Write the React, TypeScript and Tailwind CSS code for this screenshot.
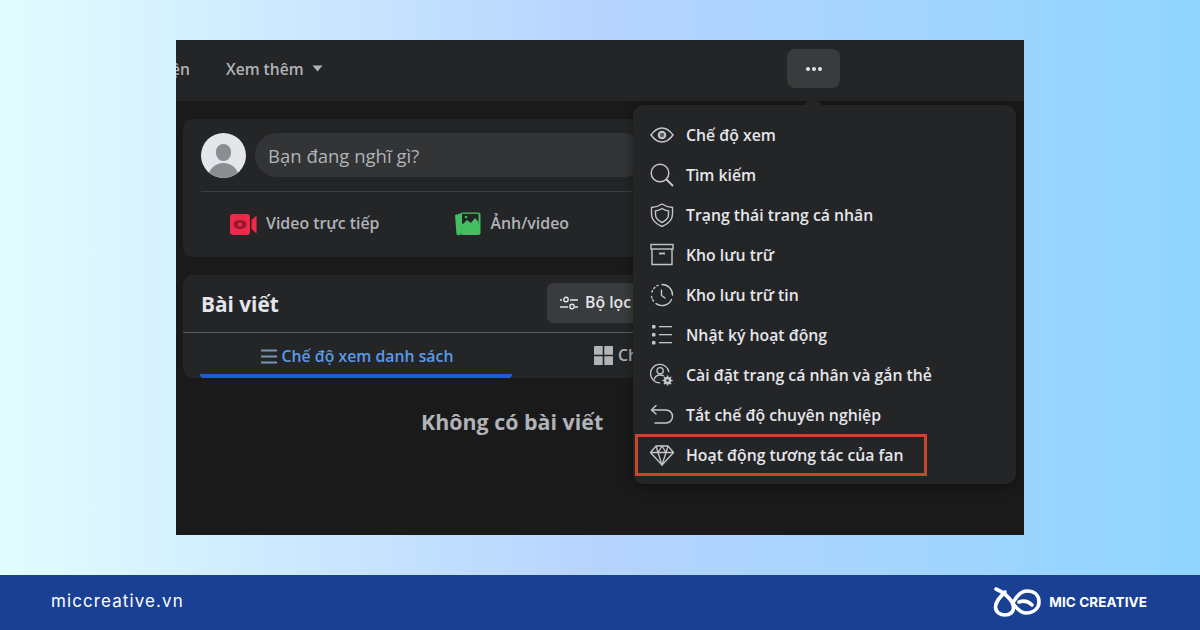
const IC = "#c4c6ca";

const Eye = () => (
  <svg width="24" height="24" viewBox="0 0 24 24" fill="none" stroke={IC} strokeWidth="1.5">
    <path d="M1 12 C5 6.5 8.500 5 12 5 C15.500 5 19 6.500 23 12 C19 17.500 15.500 19 12 19 C8.500 19 5 17.500 1 12 Z" />
    <circle cx="12" cy="12" r="3.300" fill={IC} fillOpacity="0.35" strokeWidth="2" />
  </svg>
);
const Search = () => (
  <svg width="24" height="24" viewBox="0 0 24 24" fill="none" stroke={IC} strokeWidth="1.500" strokeLinecap="round">
    <circle cx="10" cy="10" r="8.800" />
    <path d="M16.500 16.500 L22.500 22.500" strokeWidth="2" />
  </svg>
);
const Shield = () => (
  <svg width="24" height="24" viewBox="0 0 24 24" fill="none" stroke={IC} strokeWidth="1.400">
    <path d="M12 1 C15 3 18.500 4.200 22.500 4.500 V11 C22.500 17 18 21 12 23.500 C6 21 1.500 17 1.500 11 V4.500 C5.500 4.200 9 3 12 1 Z" />
    <path d="M12 5.500 C14 6.800 16.300 7.600 18.500 7.900 V11.500 C18.500 15 15.800 17.700 12 19.500 C8.200 17.700 5.500 15 5.500 11.500 V7.900 C7.700 7.600 10 6.800 12 5.500 Z" />
  </svg>
);
const Archive = () => (
  <svg width="24" height="24" viewBox="0 0 24 24" fill="none" stroke={IC} strokeWidth="1.400">
    <rect x="1" y="1.500" width="22" height="4.500" />
    <path d="M2 6 V21.500 H22 V6" />
    <path d="M9 10.500 H15" strokeWidth="1.800" />
  </svg>
);
const History = () => (
  <svg width="24" height="24" viewBox="0 0 24 24" fill="none" stroke={IC} strokeWidth="1.400" strokeLinecap="round">
    <path d="M12 1.500 A10.500 10.500 0 0 1 22.500 12" />
    <path d="M21.500 16.500 A10.500 10.500 0 0 1 6 20.700" />
    <path d="M3.500 18 A10.500 10.500 0 0 1 1.500 13" strokeDasharray="1.500 2" />
    <path d="M2 9 A10.500 10.500 0 0 1 8 2.300" strokeDasharray="1.500 2.500" />
    <path d="M11.500 7 V12.500 L15 15" />
  </svg>
);
const ListIc = () => (
  <svg width="24" height="24" viewBox="0 0 24 24" fill={IC}>
    <rect x="2" y="2" width="3.500" height="3.500" rx="0.800" />
    <rect x="2" y="10" width="3.500" height="3.500" rx="0.800" />
    <rect x="2" y="18" width="3.500" height="3.500" rx="0.800" />
    <rect x="9" y="3" width="13" height="1.300" />
    <rect x="9" y="11" width="13" height="1.300" />
    <rect x="9" y="19" width="13" height="1.300" />
  </svg>
);
const UserGear = () => (
  <svg width="26" height="26" viewBox="0 0 26 26" fill="none" stroke={IC} strokeWidth="1.400">
    <path d="M11 21.500 A10 10 0 1 1 20.500 10" />
    <circle cx="11" cy="8.500" r="3.400" />
    <path d="M4.500 18 C5.500 14.500 8 13 11 13 C12.500 13 13.800 13.300 15 14" />
    <circle cx="19" cy="19" r="3.200" fill={IC} stroke={IC} strokeWidth="1.500" />
    <path d="M19 13.500 V24.500 M13.500 19 H24.500 M15.200 15.200 L22.800 22.800 M22.800 15.200 L15.200 22.800" strokeWidth="1.800" />
    <circle cx="19" cy="19" r="1.300" fill="#242526" stroke="none" />
  </svg>
);
const Undo = () => (
  <svg width="24" height="24" viewBox="0 0 24 24" fill="none" stroke={IC} strokeWidth="1.500" strokeLinecap="round" strokeLinejoin="round">
    <path d="M2 7 H16 A6 6 0 0 1 16 20 H5" />
    <path d="M6 2.500 L1.500 7 L6 11" />
  </svg>
);
const Diamond = () => (
  <svg width="24" height="24" viewBox="0 0 24 24" fill="none" stroke={IC} strokeWidth="1.300" strokeLinejoin="round">
    <path d="M6 3 H18 L23.500 9.500 L12 22 L0.500 9.500 Z" />
    <path d="M0.500 9.500 H23.500 M6 3 L8 9.500 L12 22 L16 9.500 L18 3 M8 9.500 L12 3 L16 9.500" />
  </svg>
);

const items: [string, React.ReactNode][] = [
  ["Chế độ xem", <Eye />],
  ["Tìm kiếm", <Search />],
  ["Trạng thái trang cá nhân", <Shield />],
  ["Kho lưu trữ", <Archive />],
  ["Kho lưu trữ tin", <History />],
  ["Nhật ký hoạt động", <ListIc />],
  ["Cài đặt trang cá nhân và gắn thẻ", <UserGear />],
  ["Tắt chế độ chuyên nghiệp", <Undo />],
  ["Hoạt động tương tác của fan", <Diamond />],
];

export default function App() {
  return (
    <div className="w-[1200px] h-[630px] flex flex-col overflow-hidden font-['Open_Sans','Noto_Sans',sans-serif]">
      <div className="h-[575px] flex items-center justify-center bg-[linear-gradient(90deg,#e2fdff_0%,#b6d3ff_50%,#90d6ff_100%)]">
        <div className="relative w-[848px] h-[495px] bg-[#1a1a1b] overflow-hidden">
          {/* top bar */}
          <div className="h-[61px] bg-[#242526] flex items-center text-[15.600px] font-semibold text-[#b0b3b8]">
            <div className="w-[14px] mt-[-1px] overflow-hidden flex justify-end whitespace-nowrap shrink-0">Sự kiện</div>
            <span className="ml-[36px] mt-[-1px]">Xem thêm</span>
            <svg className="ml-[8px] mt-[-4px]" width="11" height="7" viewBox="0 0 11 7" fill="#b0b3b8">
              <path d="M0.500 0.500 H10.500 L5.500 6.500 Z" />
            </svg>
            <div className="ml-auto mr-[184px] mt-[-4px] w-[53px] h-[39px] rounded-lg bg-[#3a3b3c] flex items-center justify-center gap-[2px]">
              <span className="w-[4px] h-[4px] rounded-full bg-[#e4e6eb]" />
              <span className="w-[4px] h-[4px] rounded-full bg-[#e4e6eb]" />
              <span className="w-[4px] h-[4px] rounded-full bg-[#e4e6eb]" />
            </div>
          </div>

          {/* composer */}
          <div className="ml-[7px] mt-[18px] w-[480px] h-[138px] rounded-[10px] bg-[#242526] pl-[18px] pr-[17px] pt-[14px]">
            <div className="flex items-center gap-[9px] h-[44px]">
              <div className="relative w-[45px] h-[45px] rounded-full bg-[#e4e6eb] overflow-hidden shrink-0">
                <div className="absolute left-[15px] top-[11px] w-[15px] h-[17px] rounded-full bg-[#8a8d91]" />
                <div className="absolute left-[7px] top-[30px] w-[31px] h-[24px] rounded-t-full bg-[#8a8d91]" />
              </div>
              <div className="flex-1 h-[44px] rounded-full bg-[#333436] flex items-center pl-[13px] pt-[1px] text-[18.500px] text-[#b0b3b8]">
                Bạn đang nghĩ gì?
              </div>
            </div>
            <div className="mt-[14px] h-px bg-[#3e4042]" />
            <div className="flex items-center h-[64px] text-[15.900px] font-semibold text-[#b0b3b8]">
              <svg className="ml-[29px]" width="27" height="21" viewBox="0 0 27 21">
                <rect x="0" y="0" width="20" height="21" rx="3" fill="#f02849" />
                <path d="M21.500 6 L26.500 1.500 V19.500 L21.500 15 Z" fill="#f02849" />
                <ellipse cx="10" cy="10.500" rx="6.500" ry="4.500" fill="#8e1a30" />
                <circle cx="10" cy="10.500" r="2.200" fill="#f02849" />
              </svg>
              <span className="ml-[9px]">Video trực tiếp</span>
              <svg className="ml-[75px]" width="27" height="25" viewBox="0 0 27 25">
                <path d="M1 3 L6 1.500 V23.500 L2.500 22.500 Z" fill="#45bd62" />
                <rect x="6" y="0.500" width="20.500" height="22.500" rx="2.500" fill="#45bd62" />
                <rect x="8" y="1.800" width="16.500" height="10" fill="#242526" />
                <path d="M8 13 L13 8 L17 11 L21 6 L24.500 10 V13 Z" fill="#45bd62" />
                <circle cx="12" cy="5" r="1.300" fill="#45bd62" />
              </svg>
              <span className="ml-[9px]">Ảnh/video</span>
            </div>
          </div>

          {/* posts card */}
          <div className="ml-[7px] mt-[18px] w-[480px] h-[103px] rounded-[10px] bg-[#242526]">
            <div className="h-[58px] flex items-center pl-[18px] pr-0 border-b border-[#5a5c5e]">
              <span className="w-[77px] shrink-0 whitespace-nowrap pt-[2px] text-[20.800px] font-bold text-[#e4e6eb]">Bài viết</span>
              <div className="ml-[269px] mt-[-2px] flex-1 h-[40px] rounded-l-md bg-[#3a3b3c] flex items-center pl-[13px] pt-[1px] gap-[7px] text-[15.800px] font-semibold text-[#e4e6eb] overflow-hidden whitespace-nowrap">
                <svg width="18" height="14" viewBox="0 0 18 14" fill="none" stroke="#e4e6eb" strokeWidth="1.400" className="shrink-0">
                  <path d="M0 4 H2 M10 4 H18 M0 11 H8 M15 11 H18" />
                  <circle cx="6" cy="3.500" r="2.200" />
                  <circle cx="12" cy="10.500" r="2.200" />
                </svg>
                Bộ lọc
              </div>
            </div>
            <div className="relative h-[45px] flex text-[15.800px] font-semibold">
              <div className="ml-[17px] w-[312px] h-[45px] flex items-center justify-center gap-[5px] text-[#5a9ae6] border-b-[4px] border-[#1a5fd6] rounded-b-sm pt-[6px] pl-[2px]">
                <svg width="16" height="15" viewBox="0 0 16 15" fill="#7c93b8">
                  <rect x="0" y="0.500" width="16" height="2" />
                  <rect x="0" y="6.500" width="16" height="2" />
                  <rect x="0" y="12.500" width="16" height="2" />
                </svg>
                Chế độ xem danh sách
              </div>
              <div className="ml-[82px] h-[45px] flex items-center gap-[5px] text-[#b0b3b8] whitespace-nowrap overflow-hidden">
                <svg width="19" height="19" viewBox="0 0 19 19" fill="#b0b3b8" className="shrink-0">
                  <rect x="0" y="0" width="8.700" height="8.700" rx="0.500" />
                  <rect x="10.300" y="0" width="8.700" height="8.700" rx="0.500" />
                  <rect x="0" y="10.300" width="8.700" height="8.700" rx="0.500" />
                  <rect x="10.300" y="10.300" width="8.700" height="8.700" rx="0.500" />
                </svg>
                Ch
              </div>
            </div>
          </div>

          <div className="ml-[245px] mt-[28px] text-[21.400px] font-bold text-[#b0b3b8]">Không có bài viết</div>

          {/* dropdown */}
          <div className="absolute left-[457px] top-[65px] w-[383px] h-[379px] rounded-[10px] bg-[#242526] pt-[10px] shadow-[0_2px_12px_rgba(0,0,0,0.4)]">
            <div className="absolute left-[171px] top-[-8px] w-0 h-0 border-x-[9px] border-x-transparent border-b-[8px] border-b-[#242526]" />
            {items.map(([label, icon], i) => (
              <div key={label} className="relative h-[40px] flex items-center gap-[12px] pl-[17px] text-[15.800px] font-semibold text-[#e4e6eb]">
                <div className="w-[24px] h-[24px] shrink-0 flex items-center justify-center">{icon}</div>
                <span className="whitespace-nowrap pt-[2px]">{label}</span>
                {i === 8 && <div className="absolute left-[2px] top-[-1px] w-[292px] h-[42px] border-[3px] border-[#c9482b]" />}
              </div>
            ))}
          </div>
        </div>
      </div>

      {/* footer */}
      <div className="h-[55px] bg-[#1a4093] flex items-center pl-[51px] pr-[53px] text-white">
        <span className="text-[17px] tracking-[1.100px] font-['Inter',sans-serif] mt-[-1px]">miccreative.vn</span>
        <svg className="ml-auto mt-[-1px]" width="48" height="30" viewBox="0 0 48 30" fill="none" stroke="#fff" strokeWidth="3.600" strokeLinecap="round" strokeLinejoin="round">
          <path d="M3 2 C10 5 15 9 19 15 C23 21 27 26 33 26 C41 26 46 21 46 15 C46 8 41 4 34 4 C28 4 24 9 21 14" />
          <path d="M12 5 C6 11 2.500 15 2.500 20 C2.500 25 7 28 12 28 C17 28 20.500 25 20.500 21 C20.500 19 20 17.500 19 15" />
          <path d="M26 15 C31 13 35 14 39 18" />
        </svg>
        <span className="ml-[8px] text-[13.500px] font-bold tracking-[0.1px] font-['Inter',sans-serif]">MIC CREATIVE</span>
      </div>
    </div>
  );
}
